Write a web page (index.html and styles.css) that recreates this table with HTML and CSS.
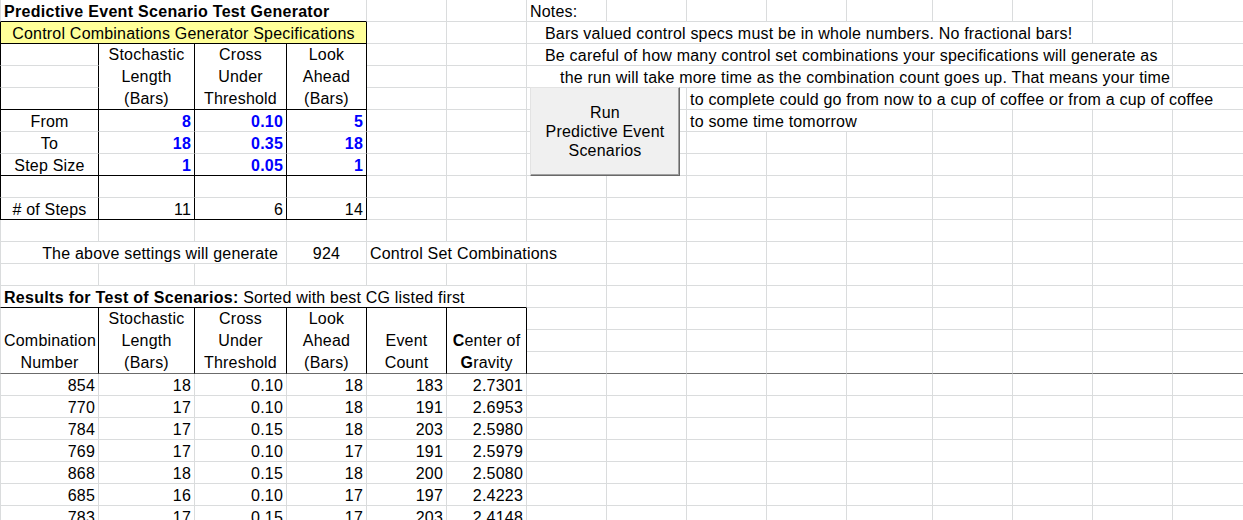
FILE: index.html
```html
<!DOCTYPE html>
<html>
<head>
<meta charset="utf-8">
<title>Predictive Event Scenario Test Generator</title>
<link rel="stylesheet" href="styles.css">
</head>
<body>
<div class="sheet">
  <!-- Row 1 -->
  <div class="c first s4 bold bb">Predictive Event Scenario Test Generator</div>
  <div class="c"></div><div class="c"></div>
  <div class="c">Notes:</div>
  <div class="c"></div><div class="c"></div><div class="c"></div><div class="c"></div><div class="c"></div><div class="c"></div><div class="c"></div><div class="c"></div>

  <!-- Row 2 -->
  <div class="c first s4 yellow ctr bl br bb">Control Combinations Generator Specifications</div>
  <div class="c"></div><div class="c"></div>
  <div class="c s7 note1">Bars valued control specs must be in whole numbers. No fractional bars!</div>
  <div class="c"></div><div class="c"></div>

  <!-- Row 3 -->
  <div class="c first bl br"></div>
  <div class="c tall ctr br bb">Stochastic<br>Length<br>(Bars)</div>
  <div class="c tall ctr br bb">Cross<br>Under<br>Threshold</div>
  <div class="c tall ctr br bb">Look<br>Ahead<br>(Bars)</div>
  <div class="c"></div><div class="c"></div>
  <div class="c s8 note1">Be careful of how many control set combinations your specifications will generate as</div>
  <div class="c"></div>

  <!-- Row 4 -->
  <div class="c first bl br"></div>
  <div class="c"></div><div class="c"></div>
  <div class="c s8 note2">the run will take more time as the combination count goes up. That means your time</div>
  <div class="c"></div>

  <!-- Row 5 -->
  <div class="c first bl br bb"></div>
  <div class="c"></div><div class="c"></div><div class="c"></div><div class="c"></div>
  <div class="c s7">to complete could go from now to a cup of coffee or from a cup of coffee</div>

  <!-- Row 6 -->
  <div class="c first bl br ctr">From</div>
  <div class="c br r in">8</div>
  <div class="c br r in">0.10</div>
  <div class="c br r in">5</div>
  <div class="c"></div><div class="c"></div><div class="c"></div><div class="c"></div>
  <div class="c s3">to some time tomorrow</div>
  <div class="c"></div><div class="c"></div><div class="c"></div><div class="c"></div>

  <!-- Row 7 -->
  <div class="c first bl br ctr">To</div>
  <div class="c br r in">18</div>
  <div class="c br r in">0.35</div>
  <div class="c br r in">18</div>
  <div class="c"></div><div class="c"></div><div class="c"></div><div class="c"></div><div class="c"></div><div class="c"></div><div class="c"></div><div class="c"></div><div class="c"></div><div class="c"></div><div class="c"></div>

  <!-- Row 8 -->
  <div class="c first bl br bb ctr">Step Size</div>
  <div class="c br bb r in">1</div>
  <div class="c br bb r in">0.05</div>
  <div class="c br bb r in">1</div>
  <div class="c"></div><div class="c"></div><div class="c"></div><div class="c"></div><div class="c"></div><div class="c"></div><div class="c"></div><div class="c"></div><div class="c"></div><div class="c"></div><div class="c"></div>

  <!-- Row 9 -->
  <div class="c first bl br"></div>
  <div class="c br"></div>
  <div class="c br"></div>
  <div class="c br"></div>
  <div class="c"></div><div class="c"></div><div class="c"></div><div class="c"></div><div class="c"></div><div class="c"></div><div class="c"></div><div class="c"></div><div class="c"></div><div class="c"></div><div class="c"></div>

  <!-- Row 10 -->
  <div class="c first bl br bb ctr"># of Steps</div>
  <div class="c br bb r">11</div>
  <div class="c br bb r">6</div>
  <div class="c br bb r">14</div>
  <div class="c"></div><div class="c"></div><div class="c"></div><div class="c"></div><div class="c"></div><div class="c"></div><div class="c"></div><div class="c"></div><div class="c"></div><div class="c"></div><div class="c"></div>

  <!-- Row 11 -->
  <div class="c first"></div><div class="c"></div><div class="c"></div><div class="c"></div><div class="c"></div><div class="c"></div><div class="c"></div><div class="c"></div><div class="c"></div><div class="c"></div><div class="c"></div><div class="c"></div><div class="c"></div><div class="c"></div><div class="c"></div>

  <!-- Row 12 -->
  <div class="c first s3 r gen">The above settings will generate</div>
  <div class="c ctr">924</div>
  <div class="c s3">Control Set Combinations</div>
  <div class="c"></div><div class="c"></div><div class="c"></div><div class="c"></div><div class="c"></div><div class="c"></div><div class="c"></div><div class="c"></div>

  <!-- Row 13 -->
  <div class="c first"></div><div class="c"></div><div class="c"></div><div class="c"></div><div class="c"></div><div class="c"></div><div class="c"></div><div class="c"></div><div class="c"></div><div class="c"></div><div class="c"></div><div class="c"></div><div class="c"></div><div class="c"></div><div class="c"></div>

  <!-- Row 14 -->
  <div class="c first s6 bb"><b>Results for Test of Scenarios:</b> Sorted with best CG listed first</div>
  <div class="c"></div><div class="c"></div><div class="c"></div><div class="c"></div><div class="c"></div><div class="c"></div><div class="c"></div><div class="c"></div><div class="c"></div>

  <!-- Rows 15-17 header -->
  <div class="c first tall ctr br hb"><br>Combination<br>Number</div>
  <div class="c tall ctr br hb">Stochastic<br>Length<br>(Bars)</div>
  <div class="c tall ctr br hb">Cross<br>Under<br>Threshold</div>
  <div class="c tall ctr br hb">Look<br>Ahead<br>(Bars)</div>
  <div class="c tall ctr br hb"><br>Event<br>Count</div>
  <div class="c tall ctr br hb"><br><b>C</b>enter of<br><b>G</b>ravity</div>
  <div class="c"></div><div class="c"></div><div class="c"></div><div class="c"></div><div class="c"></div><div class="c"></div><div class="c"></div><div class="c"></div><div class="c"></div>
  <div class="c"></div><div class="c"></div><div class="c"></div><div class="c"></div><div class="c"></div><div class="c"></div><div class="c"></div><div class="c"></div><div class="c"></div>
  <div class="c hb"></div><div class="c hb"></div><div class="c hb"></div><div class="c hb"></div><div class="c hb"></div><div class="c hb"></div><div class="c hb"></div><div class="c hb"></div><div class="c hb"></div>

  <!-- Data rows -->
  <div class="c first r">854</div><div class="c r">18</div><div class="c r">0.10</div><div class="c r">18</div><div class="c r">183</div><div class="c r">2.7301</div>
  <div class="c"></div><div class="c"></div><div class="c"></div><div class="c"></div><div class="c"></div><div class="c"></div><div class="c"></div><div class="c"></div><div class="c"></div>

  <div class="c first r">770</div><div class="c r">17</div><div class="c r">0.10</div><div class="c r">18</div><div class="c r">191</div><div class="c r">2.6953</div>
  <div class="c"></div><div class="c"></div><div class="c"></div><div class="c"></div><div class="c"></div><div class="c"></div><div class="c"></div><div class="c"></div><div class="c"></div>

  <div class="c first r">784</div><div class="c r">17</div><div class="c r">0.15</div><div class="c r">18</div><div class="c r">203</div><div class="c r">2.5980</div>
  <div class="c"></div><div class="c"></div><div class="c"></div><div class="c"></div><div class="c"></div><div class="c"></div><div class="c"></div><div class="c"></div><div class="c"></div>

  <div class="c first r">769</div><div class="c r">17</div><div class="c r">0.10</div><div class="c r">17</div><div class="c r">191</div><div class="c r">2.5979</div>
  <div class="c"></div><div class="c"></div><div class="c"></div><div class="c"></div><div class="c"></div><div class="c"></div><div class="c"></div><div class="c"></div><div class="c"></div>

  <div class="c first r">868</div><div class="c r">18</div><div class="c r">0.15</div><div class="c r">18</div><div class="c r">200</div><div class="c r">2.5080</div>
  <div class="c"></div><div class="c"></div><div class="c"></div><div class="c"></div><div class="c"></div><div class="c"></div><div class="c"></div><div class="c"></div><div class="c"></div>

  <div class="c first r">685</div><div class="c r">16</div><div class="c r">0.10</div><div class="c r">17</div><div class="c r">197</div><div class="c r">2.4223</div>
  <div class="c"></div><div class="c"></div><div class="c"></div><div class="c"></div><div class="c"></div><div class="c"></div><div class="c"></div><div class="c"></div><div class="c"></div>

  <div class="c first r">783</div><div class="c r">17</div><div class="c r">0.15</div><div class="c r">17</div><div class="c r">203</div><div class="c r">2.4148</div>
  <div class="c"></div><div class="c"></div><div class="c"></div><div class="c"></div><div class="c"></div><div class="c"></div><div class="c"></div><div class="c"></div><div class="c"></div>

  <button class="run-btn" type="button">Run<br>Predictive Event<br>Scenarios</button>
</div>
</body>
</html>
```

FILE: styles.css
```css
html, body {
  margin: 0;
  padding: 0;
  background: #ffffff;
  overflow: hidden;
}

body {
  font-family: "Liberation Sans", Arial, sans-serif;
  font-size: 16px;
  letter-spacing: 0.2px;
  color: #000000;
}

.sheet {
  position: relative;
  display: grid;
  grid-template-columns: 99px 96px 92px 80px 80px 80px 80px 80px 80px 80px 86px 80px 80px 80px 80px;
  grid-auto-rows: 22px;
  width: 1252px;
}

.c {
  box-sizing: border-box;
  border-right: 1px solid #dadcdd;
  border-bottom: 1px solid #dadcdd;
  padding: 1px 3px 0 3px;
  line-height: 21px;
  white-space: nowrap;
  overflow: visible;
  background: #ffffff;
}

.first { border-left: 1px solid #dadcdd; }
.bl { border-left-color: #000000; }
.br { border-right-color: #000000; }
.bb { border-bottom-color: #000000; }
.hb { border-bottom-color: #6b6b6b; }

.r { text-align: right; }
.ctr { text-align: center; }
.bold { font-weight: bold; letter-spacing: 0.3px; }
b { letter-spacing: 0.3px; }
.in { color: #0000ff; font-weight: bold; }

.s3 { grid-column: span 3; }
.s4 { grid-column: span 4; }
.s6 { grid-column: span 6; }
.s7 { grid-column: span 7; }
.s8 { grid-column: span 8; }

.tall {
  grid-row: span 3;
  line-height: 22px;
  padding-top: 0;
}

.yellow { background: #ffff99; }

.note1 { padding-left: 18px; }
.note2 { padding-left: 33px; }
.gen { padding-right: 8px; }

.run-btn {
  position: absolute;
  left: 530px;
  top: 87px;
  width: 150px;
  height: 89px;
  box-sizing: border-box;
  margin: 0;
  padding: 0;
  background: #f0f0f0;
  border-style: solid;
  border-width: 1px;
  border-color: #e3e3e3 #696969 #696969 #e3e3e3;
  box-shadow: inset -1px -1px 0 #a0a0a0;
  font-family: "Liberation Sans", Arial, sans-serif;
  font-size: 16px;
  letter-spacing: 0.2px;
  line-height: 19px;
  color: #000000;
  text-align: center;
  display: flex;
  align-items: center;
  justify-content: center;
}
```
